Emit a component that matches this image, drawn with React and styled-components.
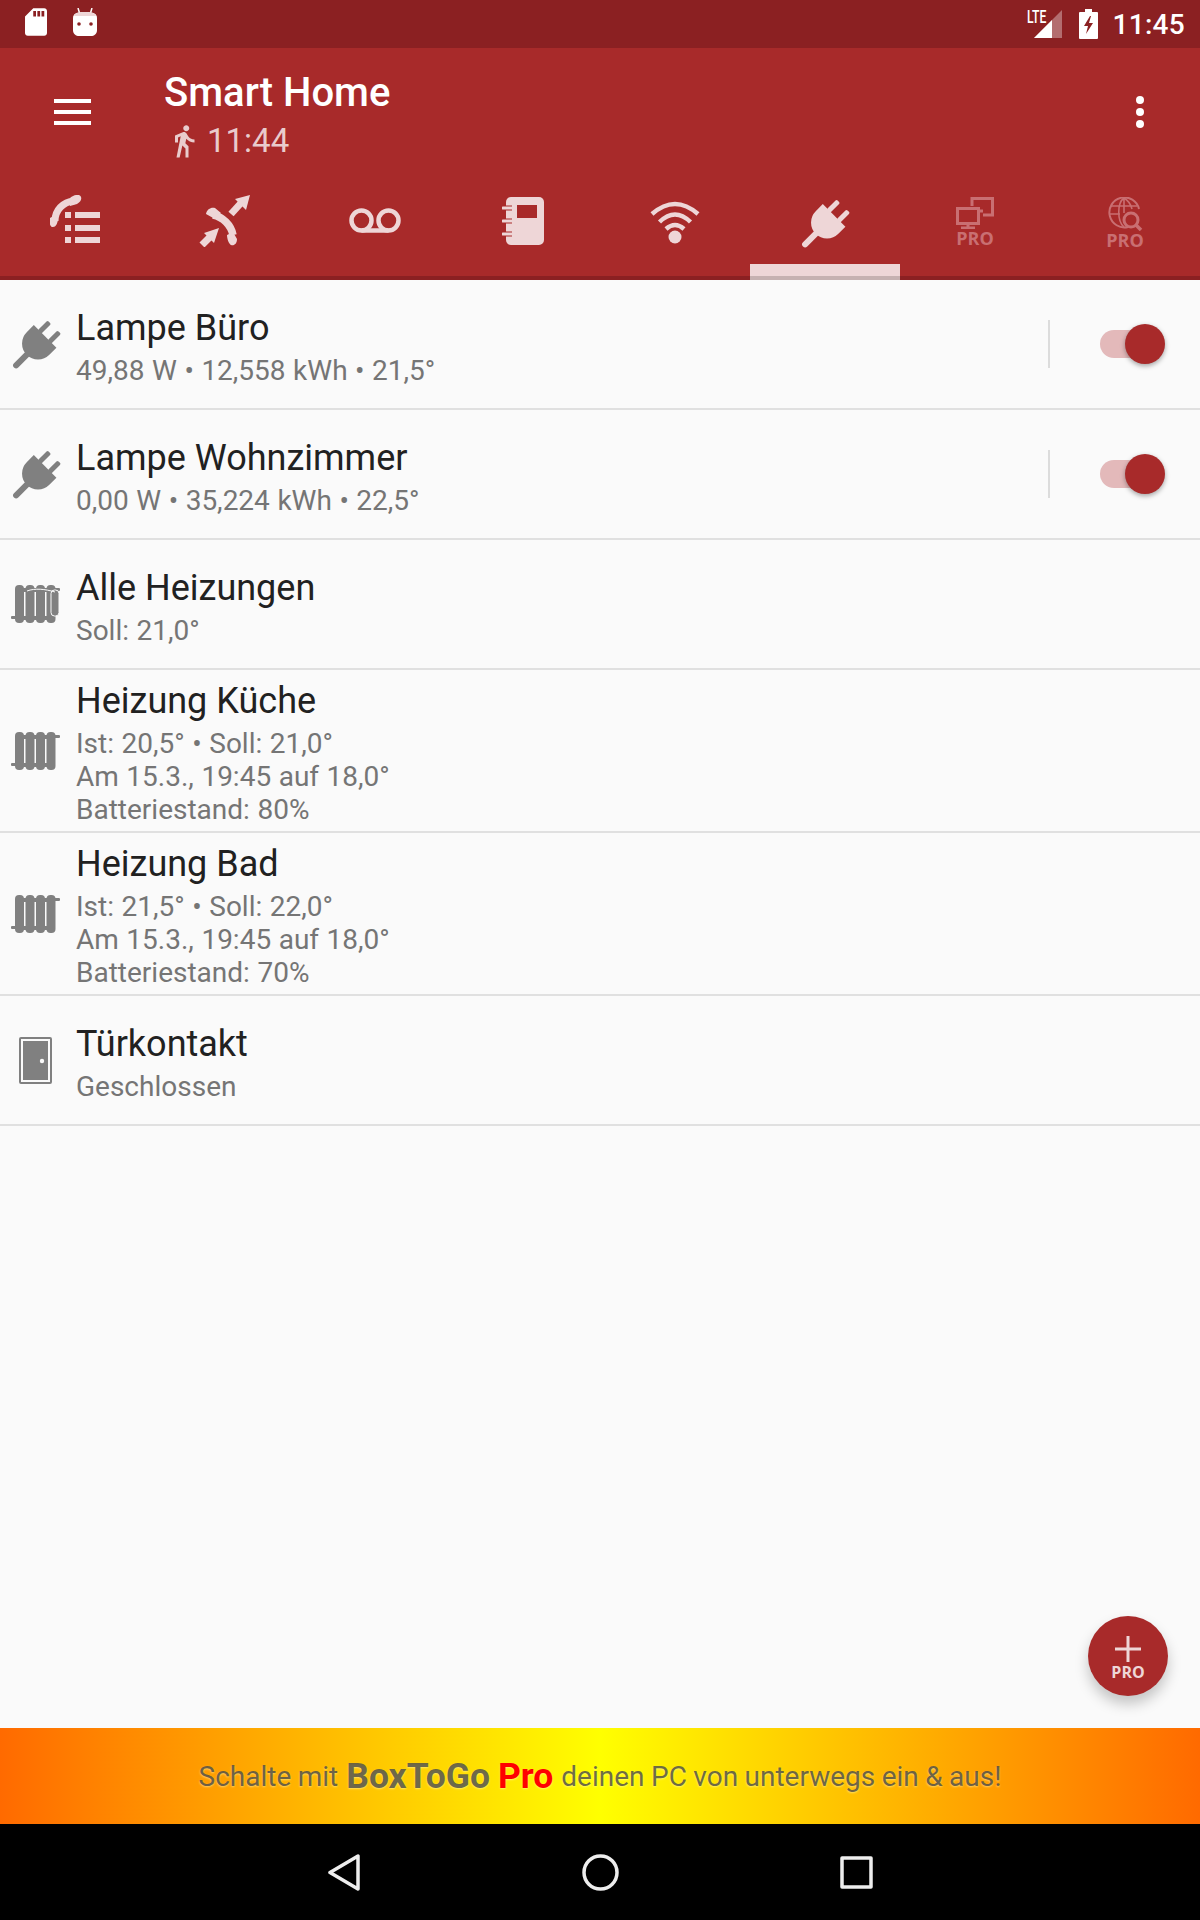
import styled, { createGlobalStyle } from 'styled-components';
import { MdDirectionsWalk } from 'react-icons/md';

const LIGHT = '#eed6d7';
const RED = '#a82a2a';
const GREY = '#808080';

const GlobalStyle = createGlobalStyle`
	html,
	body {
		margin: 0;
		padding: 0;
		background: #fafafa;
	}

	* {
		box-sizing: border-box;
	}
`;

const Screen = styled.div`
	position: relative;
	display: flex;
	flex-direction: column;
	width: 1200px;
	height: 1920px;
	overflow: hidden;
	background: #fafafa;
	font-family: Roboto, 'Liberation Sans', sans-serif;
`;

const StatusBar = styled.div`
	display: flex;
	align-items: flex-start;
	height: 48px;
	padding: 8px 15px 0 25px;
	background: #8b2022;
	color: #fff;
`;

const StatusLeft = styled.div`
	display: flex;
	gap: 26px;
	flex: 1;
`;

const StatusRight = styled.div`
	display: flex;
	align-items: flex-start;
`;

const Lte = styled.div`
	position: relative;
	width: 35px;
	height: 30px;
	margin-right: 17px;
	margin-top: 2px;
`;

const LteLabel = styled.span`
	position: absolute;
	left: 0;
	top: -2px;
	font-size: 18px;
	font-weight: 500;
	line-height: 18px;
	transform: scaleX(0.68);
	transform-origin: left;
`;

const Clock = styled.span`
	margin-left: 14px;
	font-size: 28px;
	font-weight: 500;
	line-height: 34px;
	letter-spacing: 0.3px;
`;

const Toolbar = styled.div`
	display: flex;
	align-items: center;
	height: 122px;
	padding-top: 5px;
	background: ${RED};
	color: #fff;
`;

const MenuButton = styled.div`
	display: flex;
	flex-direction: column;
	gap: 7px;
	width: 37px;
	margin: 0 73px 0 54px;
`;

const MenuLine = styled.span`
	height: 4px;
	background: #fff;
`;

const TitleBlock = styled.div`
	flex: 1;
	margin-top: 8px;
`;

const Title = styled.div`
	font-size: 40px;
	font-weight: 500;
	line-height: 46px;
`;

const Subtitle = styled.div`
	display: flex;
	align-items: center;
	gap: 5px;
	margin: 4px 0 0 2px;
	font-size: 33px;
	line-height: 42px;
	color: #e9cbcc;
`;

const MoreButton = styled.div`
	display: flex;
	flex-direction: column;
	gap: 4px;
	margin-right: 56px;
`;

const MoreDot = styled.span`
	width: 8px;
	height: 8px;
	border-radius: 50%;
	background: #fff;
`;

const Tabs = styled.div`
	display: flex;
	height: 110px;
	background: ${RED};
	border-bottom: 4px solid #8b2022;
`;

const Tab = styled.div`
	position: relative;
	display: flex;
	flex-direction: column;
	align-items: center;
	width: 150px;
	padding-top: ${(p) => p.$top}px;
	color: ${(p) => (p.$dim ? '#c96f72' : LIGHT)};

	&::after {
		content: '';
		display: ${(p) => (p.$active ? 'block' : 'none')};
		position: absolute;
		left: 0;
		right: 0;
		bottom: -4px;
		height: 16px;
		background: linear-gradient(${LIGHT} 12px, #c6b1b1 12px);
	}
`;

const ProLabel = styled.span`
	margin-top: 1px;
	font-family: 'Open Sans', sans-serif;
	font-size: 18px;
	font-weight: 700;
	line-height: 17px;
`;

const List = styled.div`
	flex: 1;
`;

const Row = styled.div`
	display: flex;
	align-items: center;
	height: ${(p) => (p.$tall ? 163 : 130)}px;
	border-bottom: 2px solid #e0e0e0;
`;

const RowIcon = styled.div`
	display: flex;
	justify-content: center;
	width: 76px;
	padding-right: 4px;
	flex-shrink: 0;
	color: ${GREY};
`;

const RowText = styled.div`
	flex: 1;
	padding-top: 5px;
`;

const RowTitle = styled.div`
	margin-bottom: 5px;
	font-size: 36px;
	line-height: 42px;
	color: #212121;
`;

const RowSub = styled.div`
	font-size: 28px;
	line-height: 33px;
	word-spacing: 0.6px;
	color: #757575;
`;

const SwitchArea = styled.div`
	display: flex;
	align-items: center;
	gap: 50px;
	margin-right: 43px;
`;

const Divider = styled.span`
	width: 2px;
	height: 48px;
	background: #dcdcdc;
`;

const SwitchTrack = styled.span`
	position: relative;
	display: block;
	width: 57px;
	height: 28px;
	border-radius: 14px;
	background: #e3b9ba;
`;

const SwitchThumb = styled.span`
	position: absolute;
	top: -6px;
	right: -8px;
	width: 40px;
	height: 40px;
	border-radius: 50%;
	background: ${RED};
	box-shadow: 0 2px 5px rgba(0, 0, 0, 0.35);
`;

const Fab = styled.div`
	position: absolute;
	left: 1088px;
	top: 1616px;
	display: flex;
	flex-direction: column;
	align-items: center;
	width: 80px;
	height: 80px;
	padding-top: 20px;
	border-radius: 50%;
	background: ${RED};
	color: ${LIGHT};
	box-shadow: 0 8px 14px rgba(0, 0, 0, 0.22);
`;

const FabLabel = styled.span`
	margin-top: 3px;
	font-family: 'Open Sans', sans-serif;
	font-size: 16px;
	font-weight: 700;
	line-height: 14px;
`;

const Banner = styled.div`
	display: flex;
	align-items: center;
	justify-content: center;
	gap: 8px;
	height: 96px;
	background: linear-gradient(90deg, #ff6a00, #ffff00 50%, #ff6a00);
	font-size: 28px;
	word-spacing: -0.5px;
	color: rgba(70, 70, 70, 0.78);
	text-shadow: 0 1px 2px rgba(255, 255, 200, 0.5);
`;

const BannerBrand = styled.b`
	font-size: 35.5px;
	font-weight: 700;
	color: ${(p) => p.$color || 'inherit'};
`;

const NavBar = styled.div`
	display: flex;
	justify-content: center;
	align-items: center;
	height: 96px;
	background: #000;
	color: #eee;
`;

const NavSlot = styled.div`
	display: flex;
	justify-content: center;
	width: 256px;
`;

const SdIcon = () => (
	<svg width="22" height="28" viewBox="4 2 16 20" fill="currentColor">
		<path d="M18 2h-8L4.02 8 4 20c0 1.1.9 2 2 2h12c1.1 0 2-.9 2-2V4c0-1.1-.9-2-2-2zm-6 6h-2V4h2v4zm3 0h-2V4h2v4zm3 0h-2V4h2v4z" />
	</svg>
);

const DebugIcon = () => (
	<svg width="24" height="28" viewBox="0 0 24 28">
		<path d="M5 0l1.5 5M19 0l-1.5 5" stroke="#fff" strokeWidth="1.5" fill="none" />
		<path d="M0 10c0-4 3-6 12-6s12 2 12 6v12c0 4-3 6-6 6H6c-3 0-6-2-6-6z" fill="#fff" />
		<path d="M1 8c1-3 4-4 11-4s10 1 11 4z" fill="#eed6d7" />
		<circle cx="6" cy="16" r="1.8" fill="#8b2022" />
		<circle cx="18" cy="16" r="1.8" fill="#8b2022" />
	</svg>
);

const SignalIcon = () => (
	<svg width="28" height="28" viewBox="0 0 28 28" style={{ position: 'absolute', left: 7, top: 0 }}>
		<path d="M28 0V28H0z" fill="#fff" opacity="0.35" />
		<path d="M18 10V28H0z" fill="#fff" />
	</svg>
);

const BatteryIcon = () => (
	<svg width="19" height="30" viewBox="0 0 19 30" style={{ marginTop: 1 }}>
		<path
			d="M6 0h7v3h5a1 1 0 0 1 1 1v25a1 1 0 0 1-1 1H1a1 1 0 0 1-1-1V4a1 1 0 0 1 1-1h5z"
			fill="#fff"
		/>
		<path d="M11 7L5 17h4l-2 8 7-11h-4l2-7z" fill="#8b2022" />
	</svg>
);

const PhoneListIcon = () => (
	<svg width="50" height="50" viewBox="0 0 50 50" fill="currentColor">
		<path d="M24 6C13 7 5 15 5 26" fill="none" stroke="currentColor" strokeWidth="7" />
		<path d="M20 3c5-4 10-4 11-1s-1 5-4 7l-7 2zM0 23c-1 5 0 9 3 9 3 0 4-3 5-7l-1-6z" />
		<rect x="15" y="17" width="6" height="6" />
		<rect x="25" y="17" width="25" height="6" />
		<rect x="15" y="30" width="6" height="6" />
		<rect x="25" y="30" width="25" height="6" />
		<rect x="15" y="42" width="6" height="6" />
		<rect x="25" y="42" width="25" height="6" />
	</svg>
);

const CallArrowsIcon = () => (
	<svg width="52" height="52" viewBox="0 0 52 52" fill="currentColor">
		<path d="M51 0L36 4l11 11z" />
		<path d="M42 8L32 19" stroke="currentColor" strokeWidth="7" fill="none" />
		<path d="M20 33L5 38l10 10z" />
		<path d="M11 42L3 50" stroke="currentColor" strokeWidth="7" fill="none" />
		<path d="M14 20C24 22 32 30 34 40" fill="none" stroke="currentColor" strokeWidth="7.5" />
		<path d="M7 19c1-5 5-7 9-6l6 5-6 6zM28 40l6-3 4 7c0 5-3 7-6 6-2-1-4-6-4-10z" />
	</svg>
);

const VoicemailIcon = () => (
	<svg width="52" height="26" viewBox="0 0 52 26" fill="none" stroke="currentColor" strokeWidth="4.5">
		<circle cx="12.5" cy="12.5" r="10" />
		<circle cx="39.5" cy="12.5" r="10" />
		<path d="M12.5 22.5h27" />
	</svg>
);

const NotebookIcon = () => (
	<svg width="42" height="48" viewBox="0 0 42 48" fill="currentColor" style={{ marginLeft: -4 }}>
		<rect x="4" y="0" width="38" height="48" rx="5" />
		<rect x="15" y="8" width="20" height="13" fill={RED} />
		<path d="M1 11h9M1 24h9M1 37h9" stroke={RED} strokeWidth="5" />
		<path d="M1 11h9M1 24h9M1 37h9" stroke="currentColor" strokeWidth="3" strokeLinecap="round" />
	</svg>
);

const WifiIcon = () => (
	<svg width="50" height="44" viewBox="0 0 50 44" fill="none" stroke="currentColor" strokeWidth="4.5">
		<path d="M2 14Q25 -6 48 14M9.5 22Q25 7 40.5 22M16 29Q25 21 34 29" />
		<circle cx="25" cy="37" r="6.5" fill="currentColor" stroke="none" />
	</svg>
);

const PlugIcon = () => (
	<svg width="48" height="48" viewBox="0 0 48 48" fill="currentColor" overflow="visible">
		<g transform="translate(22.5 27) rotate(45)">
			<path d="M-16 -15H16V-5A16 16 0 0 1 -16 -5Z" />
			<rect x="-9.5" y="-28" width="5" height="14" rx="1.5" />
			<rect x="4.5" y="-28" width="5" height="14" rx="1.5" />
			<rect x="-3" y="5" width="6" height="24" rx="3" />
		</g>
	</svg>
);

const ComputersIcon = () => (
	<svg width="38" height="32" viewBox="0 0 38 32" fill="none" stroke="currentColor" strokeWidth="3">
		<path d="M16 9V1.5H36.5V18H27" />
		<path d="M27 14h-4" />
		<rect x="1.5" y="11.5" width="21" height="15" />
		<path d="M12 26v4M5 31h14" strokeWidth="3" />
	</svg>
);

const GlobeIcon = () => (
	<svg width="35" height="34" viewBox="0 0 35 34" fill="none" stroke="currentColor" strokeWidth="2">
		<path d="M20 30A15 15 0 1 1 31 12" />
		<path d="M16 1C9 6 9 24 16 30M16 1C21 4 23 8 24 12M16 1V16M3 9H29M1 17H12" strokeWidth="1.6" />
		<circle cx="23" cy="23" r="7" strokeWidth="3" />
		<path d="M28 28l5 5" strokeWidth="3.5" />
	</svg>
);

const RadiatorIcon = ({ valve }) => (
	<svg width="50" height="42" viewBox="0 0 50 42" fill={GREY}>
		<rect x="4" y="2" width="9" height="38" rx="4" />
		<rect x="14.5" y="2" width="9" height="38" rx="4" />
		<rect x="25" y="2" width="9" height="38" rx="4" />
		<rect x="35.5" y="2" width="9" height="38" rx="4" />
		<rect x="6" y="5" width="37" height="4" />
		<rect x="6" y="33" width="37" height="4" />
		<rect x="42" y="5" width="7" height="3" rx="1" />
		<rect x="0" y="33" width="6" height="3" rx="1" />
		{valve && (
			<>
				<rect x="40" y="7" width="8" height="26" rx="3.5" stroke="#fafafa" strokeWidth="1" />
				<path d="M16 8c8-3 18-2 28 1" stroke="#fafafa" strokeWidth="1" fill="none" />
			</>
		)}
	</svg>
);

const DoorIcon = () => (
	<svg width="33" height="47" viewBox="0 0 33 47" fill="none" style={{ marginLeft: -1 }}>
		<rect x="1" y="1" width="31" height="45" rx="1" stroke={GREY} strokeWidth="2" />
		<rect x="4" y="4" width="25" height="39" fill={GREY} />
		<circle cx="23" cy="24" r="2.2" fill="#fafafa" />
	</svg>
);

const tabs = [
	{ icon: <PhoneListIcon />, top: 25 },
	{ icon: <CallArrowsIcon />, top: 25 },
	{ icon: <VoicemailIcon />, top: 38 },
	{ icon: <NotebookIcon />, top: 27 },
	{ icon: <WifiIcon />, top: 30 },
	{ icon: <PlugIcon />, top: 29, active: true },
	{ icon: <ComputersIcon />, top: 27, dim: true, pro: true },
	{ icon: <GlobeIcon />, top: 27, dim: true, pro: true },
];

const rows = [
	{ icon: <PlugIcon />, title: 'Lampe Büro', lines: ['49,88 W • 12,558 kWh • 21,5°'], toggle: true },
	{ icon: <PlugIcon />, title: 'Lampe Wohnzimmer', lines: ['0,00 W • 35,224 kWh • 22,5°'], toggle: true },
	{ icon: <RadiatorIcon valve />, title: 'Alle Heizungen', lines: ['Soll: 21,0°'] },
	{
		icon: <RadiatorIcon />,
		title: 'Heizung Küche',
		lines: ['Ist: 20,5° • Soll: 21,0°', 'Am 15.3., 19:45 auf 18,0°', 'Batteriestand: 80%'],
		tall: true,
	},
	{
		icon: <RadiatorIcon />,
		title: 'Heizung Bad',
		lines: ['Ist: 21,5° • Soll: 22,0°', 'Am 15.3., 19:45 auf 18,0°', 'Batteriestand: 70%'],
		tall: true,
	},
	{ icon: <DoorIcon />, title: 'Türkontakt', lines: ['Geschlossen'] },
];

const App = () => (
	<Screen>
		<GlobalStyle />
		<StatusBar>
			<StatusLeft>
				<SdIcon />
				<DebugIcon />
			</StatusLeft>
			<StatusRight>
				<Lte>
					<LteLabel>LTE</LteLabel>
					<SignalIcon />
				</Lte>
				<BatteryIcon />
				<Clock>11:45</Clock>
			</StatusRight>
		</StatusBar>
		<Toolbar>
			<MenuButton>
				<MenuLine />
				<MenuLine />
				<MenuLine />
			</MenuButton>
			<TitleBlock>
				<Title>Smart Home</Title>
				<Subtitle>
					<MdDirectionsWalk size={36} />
					11:44
				</Subtitle>
			</TitleBlock>
			<MoreButton>
				<MoreDot />
				<MoreDot />
				<MoreDot />
			</MoreButton>
		</Toolbar>
		<Tabs>
			{tabs.map((tab, index) => (
				<Tab key={index} $top={tab.top} $dim={tab.dim} $active={tab.active}>
					{tab.icon}
					{tab.pro && <ProLabel>PRO</ProLabel>}
				</Tab>
			))}
		</Tabs>
		<List>
			{rows.map((row) => (
				<Row key={row.title} $tall={row.tall}>
					<RowIcon>{row.icon}</RowIcon>
					<RowText>
						<RowTitle>{row.title}</RowTitle>
						{row.lines.map((line) => (
							<RowSub key={line}>{line}</RowSub>
						))}
					</RowText>
					{row.toggle && (
						<SwitchArea>
							<Divider />
							<SwitchTrack>
								<SwitchThumb />
							</SwitchTrack>
						</SwitchArea>
					)}
				</Row>
			))}
		</List>
		<Fab>
			<svg width="26" height="26" viewBox="0 0 26 26" stroke="currentColor" strokeWidth="3">
				<path d="M13 0v26M0 13h26" />
			</svg>
			<FabLabel>PRO</FabLabel>
		</Fab>
		<Banner>
			<span>Schalte mit</span>
			<BannerBrand>BoxToGo</BannerBrand>
			<BannerBrand $color="#ff0000">Pro</BannerBrand>
			<span>deinen PC von unterwegs ein &amp; aus!</span>
		</Banner>
		<NavBar>
			<NavSlot>
				<svg width="32" height="37" viewBox="0 0 32 37" fill="none" stroke="currentColor" strokeWidth="3.5" strokeLinejoin="round">
					<path d="M30 2V35L2 18.5z" />
				</svg>
			</NavSlot>
			<NavSlot>
				<svg width="37" height="37" viewBox="0 0 37 37" fill="none" stroke="currentColor" strokeWidth="3.5">
					<circle cx="18.5" cy="18.5" r="16.5" />
				</svg>
			</NavSlot>
			<NavSlot>
				<svg width="33" height="33" viewBox="0 0 33 33" fill="none" stroke="currentColor" strokeWidth="3.5" strokeLinejoin="round">
					<rect x="2" y="2" width="29" height="29" />
				</svg>
			</NavSlot>
		</NavBar>
	</Screen>
);

export default App;
